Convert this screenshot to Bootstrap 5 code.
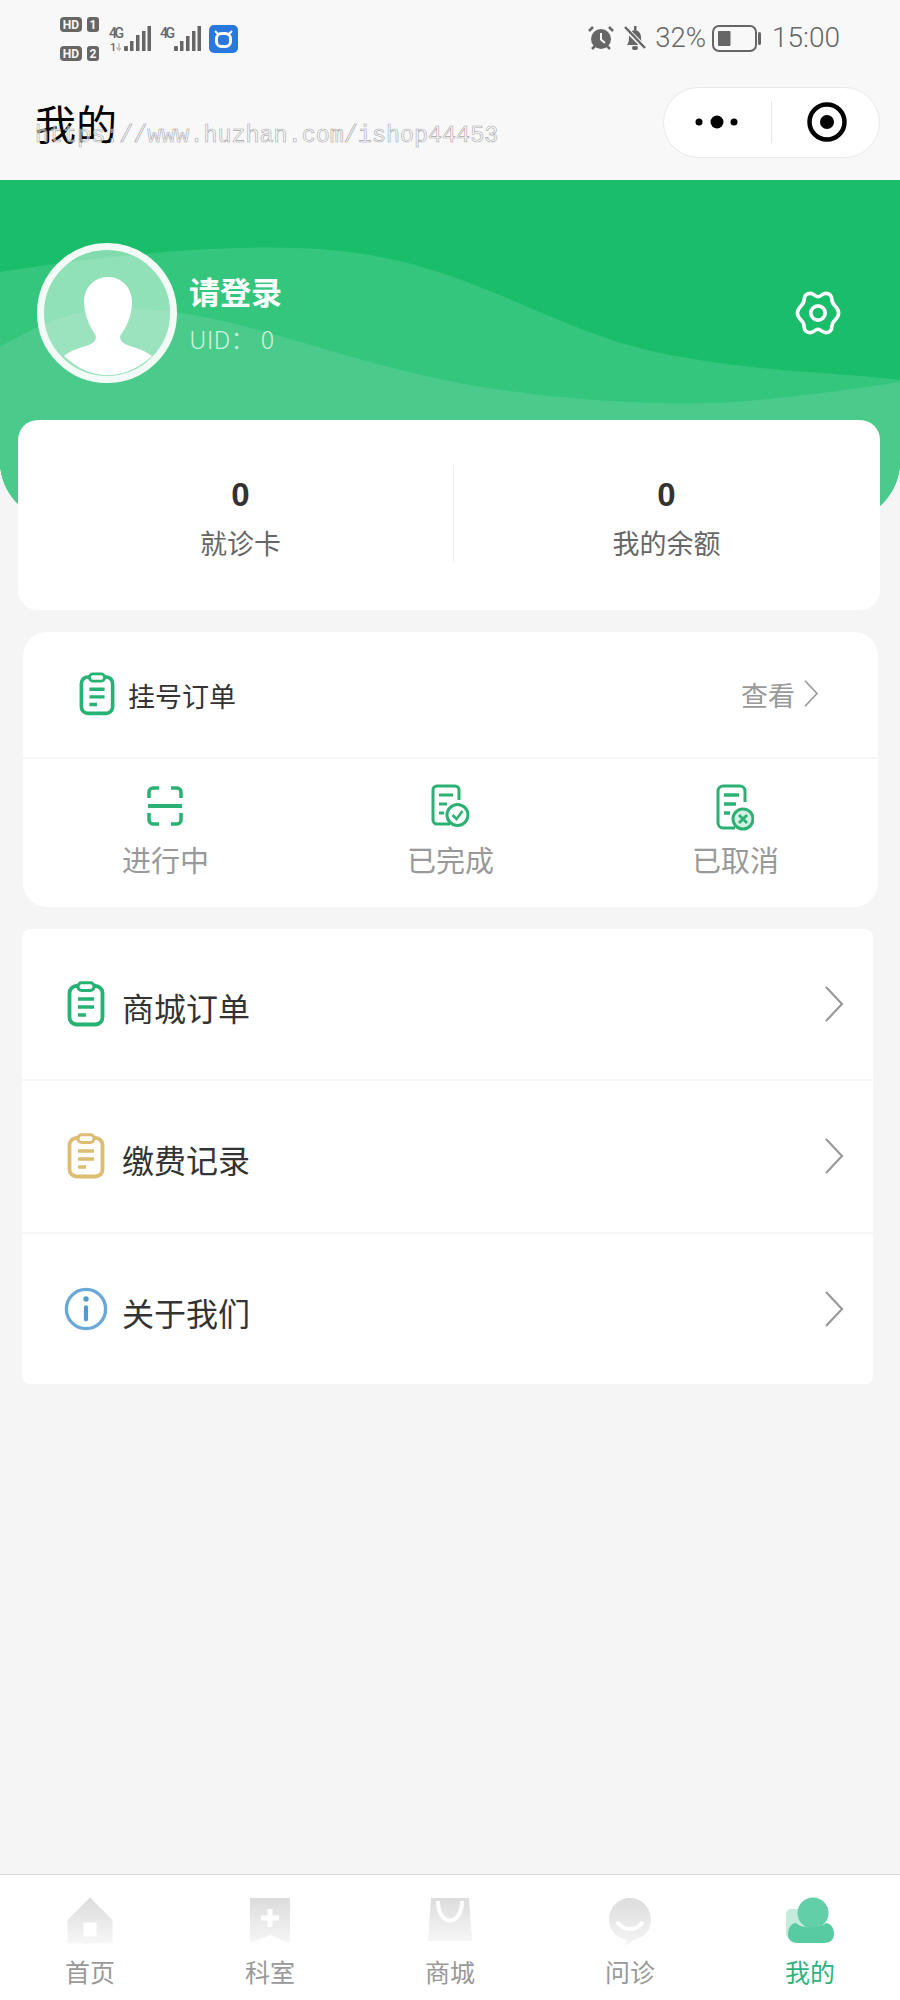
<!DOCTYPE html>
<html lang="zh-CN">
<head>
<meta charset="utf-8">
<title>我的</title>
<link href="https://cdn.jsdelivr.net/npm/bootstrap@5.3.0/dist/css/bootstrap.min.css" rel="stylesheet">
<style>
body{width:900px;min-height:2000px;margin:0;background:#f5f5f5;font-family:"Noto Sans CJK SC","Noto Sans",sans-serif;color:#333;overflow-x:hidden}
.shell{min-height:2000px}
.chrome{height:180px;background:#f8f8f9}
.statusline{height:70px;color:#666}
.statusline svg{display:block}
.status-right{padding:24px 60px 0 0;font-family:Roboto,sans-serif;font-weight:300;line-height:1;color:#666}
.pct{font-size:27.5px;margin:0 6px 0 7px}
.clock{font-size:28px;margin-left:10px}
.titlerow{height:110px;padding:0 20px 0 35px}
.title-text{font-size:41px;color:#000;line-height:1;margin-top:-6px}
.capsule{width:217px;height:71px;background:#fff;border:1px solid #e9e9e9;border-radius:36px;margin-top:-6px}
.watermark{position:absolute;left:35px;top:122px;font-family:"Liberation Mono",monospace;font-size:23.4px;line-height:1.2;color:rgba(255,255,255,.55);-webkit-text-stroke:.6px #a8a8a8;white-space:nowrap}
.hero{height:341px;background:#1abe6a;border-radius:0 0 60px 60px;overflow:hidden;padding:63px 59px 0 37px}
.wave{position:absolute;left:0;top:0}
.hero-row{position:relative}
.avatar-ring{width:140px;height:140px;border:7px solid #f2fbf6;background:rgba(255,255,255,.45);overflow:hidden;flex:none}
.avatar-ring svg{display:block}
.who{margin-left:12px}
.who-name{font-size:31px;font-weight:700;color:#fff;line-height:1;margin-bottom:20px}
.who-uid{font-size:25px;color:#cdf2de;line-height:1;font-weight:300}
.stats{margin:-101px 20px 0 18px;height:190px;border-radius:20px}
.stat-a{width:435px;padding-left:10px}
.stat-b{width:427px;position:relative}
.stat-b::before{content:"";position:absolute;left:0;top:45px;height:97px;width:1px;background:#f0f0f0}
.stat-num{font-family:"Liberation Sans",sans-serif;font-weight:700;font-size:33px;line-height:1;color:#333;padding-top:58px}
.stat-label{font-size:27px;line-height:1;color:#666;margin-top:18px}
.order{margin:22px 22px 0 23px;height:275px;border-radius:24px}
.order-head{height:127px;padding:0 59px 2px 56px;border-bottom:2px solid #f5f5f5}
.order-head-title{font-size:27px;line-height:1;color:#333;margin-left:13px;margin-top:4px}
.order-more{font-size:27px;line-height:1;color:#999;margin-top:2px}
.order-col{width:33.33%}
.order-icon{height:52px}
.order-label{font-size:29px;line-height:1;color:#999;margin-top:9px}
.order-body{padding-top:25px}
.menu{margin:22px 27px 0 22px;height:455px;border-radius:8px}
.menu-row{flex:1;padding:0 29px 0 42px;border-bottom:2px solid #f5f5f5}
.menu-row:last-child{border-bottom:0}
.menu-ico{width:44px}
.menu-text{font-size:32px;line-height:1;color:#333;margin-left:14px;margin-top:6px}
.tabs{height:126px;background:#fff;border-top:1px solid #d9d9d9}
.tab-item{width:180px;padding-top:22px}
.tab-label{font-size:25px;line-height:1;color:#999;margin-top:14px}
.tab-on{color:#2fb27c}
.tab-pic{height:48px}
.tab-pic svg{display:block}
</style>
</head>
<body>
<svg width="0" height="0" class="position-absolute">
  <defs>
    <symbol id="clip" viewBox="0 0 38 46">
      <rect x="2.5" y="5" width="33" height="38.5" rx="7" fill="none" stroke="currentColor" stroke-width="3.8"/>
      <rect x="11" y="1.8" width="16" height="7.6" rx="3.6" fill="#fff" stroke="currentColor" stroke-width="3"/>
      <path d="M11 18h16M11 26h16M11 34h8" fill="none" stroke="currentColor" stroke-width="3.6"/>
    </symbol>
    <symbol id="chev" viewBox="0 0 20 36">
      <path d="M2 1l16 17L2 35" fill="none" stroke="currentColor" stroke-width="2.2"/>
    </symbol>
    <linearGradient id="fade" x1="0" y1="0" x2="0" y2="1">
      <stop offset="0" stop-color="#dcdcdc"/>
      <stop offset="1" stop-color="#f6f6f6"/>
    </linearGradient>
  </defs>
</svg>

<div class="shell d-flex flex-column position-relative">
  <div class="chrome">
    <div class="statusline d-flex justify-content-between">
      <svg width="260" height="70" viewBox="0 0 260 70">
        <g font-family="Roboto,sans-serif" font-weight="700" fill="#f8f8f9" text-anchor="middle">
          <rect x="60" y="17" width="22" height="15" rx="4" fill="#666"/><text x="71" y="29" font-size="12">HD</text>
          <rect x="87" y="17" width="12" height="15" rx="3" fill="#666"/><text x="93" y="29" font-size="12">1</text>
          <rect x="60" y="46" width="22" height="15" rx="4" fill="#666"/><text x="71" y="58" font-size="12">HD</text>
          <rect x="87" y="46" width="12" height="15" rx="3" fill="#666"/><text x="93" y="58" font-size="12">2</text>
        </g>
        <g font-family="Roboto,sans-serif" font-weight="500" fill="#666" font-size="14">
          <text x="109" y="38" textLength="15">4G</text>
          <text x="160" y="38" textLength="15">4G</text>
          <text x="110" y="51" font-size="11">1</text>
        </g>
        <path d="M119 43v7l-2.500-2.500M119 50l2-2" stroke="#bbb" stroke-width="1.500" fill="none"/>
        <g fill="#666">
          <rect x="124" y="46" width="4" height="5" rx="1"/><rect x="130" y="41" width="3.500" height="10"/><rect x="136" y="35" width="3.500" height="16"/><rect x="142" y="31" width="3.500" height="20"/><rect x="147.500" y="26" width="3.500" height="25"/>
          <rect x="174" y="46" width="4" height="5" rx="1"/><rect x="180" y="41" width="3.500" height="10"/><rect x="186" y="36" width="3.500" height="15"/><rect x="192" y="31" width="3.500" height="20"/><rect x="197.500" y="26" width="3.500" height="25"/>
        </g>
        <rect x="209" y="25" width="29" height="28" rx="5" fill="#2b78dd"/>
        <rect x="216.500" y="33.500" width="14" height="13" rx="5" fill="none" stroke="#fff" stroke-width="3"/>
        <path d="M215 31l3 3M232 31l-3 3" stroke="#fff" stroke-width="2"/>
      </svg>
      <div class="status-right d-flex align-items-center align-self-start">
        <svg width="26" height="26" viewBox="0 0 26 26">
          <circle cx="13" cy="14" r="10" fill="#666"/>
          <path d="M13 8v6.500l4 3.500" stroke="#f8f8f9" stroke-width="2" fill="none"/>
          <path d="M1 6l4-4M25 6l-4-4M4 24l3-3M22 24l-3-3" stroke="#666" stroke-width="2.500"/>
        </svg>
        <svg width="26" height="26" viewBox="0 0 26 26" class="ms-2">
          <path d="M5 20c1.500-2 2-4 2-8 0-4 3-7 6-7s6 3 6 7c0 4 1 6 2.500 8z" fill="#666"/>
          <rect x="10" y="21" width="6" height="4" rx="2" fill="#666"/>
          <rect x="12" y="1" width="2.500" height="4" fill="#666"/>
          <path d="M3 3l20 20" stroke="#f8f8f9" stroke-width="5"/>
          <path d="M3 2l20 21" stroke="#666" stroke-width="2.500"/>
        </svg>
        <span class="pct">32%</span>
        <svg width="50" height="27" viewBox="0 0 50 27">
          <rect x="1" y="1" width="43" height="25" rx="6" fill="none" stroke="#666" stroke-width="2"/>
          <rect x="6" y="6" width="12.500" height="15" rx="1" fill="#666"/>
          <rect x="46" y="7" width="3" height="13" rx="1.500" fill="#666"/>
        </svg>
        <span class="clock">15:00</span>
      </div>
    </div>
    <div class="titlerow d-flex justify-content-between align-items-center">
      <div class="title-text">我的</div>
      <div class="capsule d-flex align-items-center">
        <svg width="215" height="69" viewBox="0 0 215 69">
          <circle cx="35" cy="34" r="3.500" fill="#000"/><circle cx="53" cy="34" r="6.500" fill="#000"/><circle cx="70" cy="34" r="3.500" fill="#000"/>
          <path d="M107.500 13v42" stroke="#e6e6e6" stroke-width="1"/>
          <circle cx="163" cy="34" r="17.500" fill="none" stroke="#000" stroke-width="4.500"/><circle cx="163" cy="34" r="7" fill="#000"/>
        </svg>
      </div>
    </div>
  </div>

  <div class="watermark">https://www.huzhan.com/ishop44453</div>

  <div class="hero position-relative">
    <svg class="wave" width="900" height="341" viewBox="0 0 900 341">
      <path d="M0 92C90 78 230 60 340 71 470 84 550 150 660 173 760 193 840 192 900 200V341H0Z" fill="#35c67e"/>
      <path d="M0 167C30 150 70 126 130 128 240 132 330 180 470 205 570 222 680 228 760 220 820 214 860 208 900 202V341H0Z" fill="#4acb8b"/>
    </svg>
    <div class="hero-row d-flex align-items-center">
      <div class="avatar-ring rounded-circle">
        <svg width="126" height="126" viewBox="0 0 126 126">
          <path d="M64 27C50 27 40 38 40 52 40 66 47 78 52 86 52 92 48 94 42 96 32 99 26 101 20 106 35 120 50 125 63 125 80 125 95 118 108 106 100 100 92 98 86 96 80 94 76 92 76 86 82 78 88 66 88 52 88 38 78 27 64 27Z" fill="#fff"/>
        </svg>
      </div>
      <div class="who flex-grow-1">
        <div class="who-name">请登录</div>
        <div class="who-uid">UID： 0</div>
      </div>
      <svg width="46" height="46" viewBox="0 0 48 48">
        <path d="M24 7C27 7 28.500 3.500 32 3.500 36 3.500 38.500 6 38.500 10 38.500 13 40 15 42 17 44.500 19.500 45.500 21.500 45.500 24 45.500 26.500 44.500 28.500 42 31 40 33 38.500 35 38.500 38 38.500 42 36 44.500 32 44.500 28.500 44.500 27 41 24 41 21 41 19.500 44.500 16 44.500 12 44.500 9.500 42 9.500 38 9.500 35 8 33 6 31 3.500 28.500 2.500 26.500 2.500 24 2.500 21.500 3.500 19.500 6 17 8 15 9.500 13 9.500 10 9.500 6 12 3.500 16 3.500 19.500 3.500 21 7 24 7Z" fill="none" stroke="#fff" stroke-width="3.800"/>
        <circle cx="24" cy="24" r="7.500" fill="none" stroke="#fff" stroke-width="3.800"/>
      </svg>
    </div>
  </div>

  <div class="card border-0 stats position-relative">
    <div class="d-flex">
      <div class="stat-a text-center">
        <div class="stat-num">0</div>
        <div class="stat-label">就诊卡</div>
      </div>
      <div class="stat-b text-center">
        <div class="stat-num">0</div>
        <div class="stat-label">我的余额</div>
      </div>
    </div>
  </div>

  <div class="card border-0 order">
    <div class="order-head d-flex align-items-center justify-content-between">
      <div class="d-flex align-items-center">
        <svg width="36" height="44" style="color:#26b273"><use href="#clip"/></svg>
        <span class="order-head-title">挂号订单</span>
      </div>
      <div class="d-flex align-items-center gap-2">
        <span class="order-more">查看</span>
        <svg width="16" height="27" style="color:#999"><use href="#chev"/></svg>
      </div>
    </div>
    <div class="order-body d-flex text-center">
      <div class="order-col">
        <div class="order-icon d-flex justify-content-center">
          <svg width="38" height="44" viewBox="0 0 38 44" fill="none" stroke="#2bb173" stroke-width="3.500">
            <path d="M13 4H7a4 4 0 0 0-4 4v6M25 4h6a4 4 0 0 1 4 4v6M3 29v7a4 4 0 0 0 4 4h6M35 29v7a4 4 0 0 1-4 4h-6"/>
            <path d="M2 22h34" stroke-width="4"/>
          </svg>
        </div>
        <div class="order-label">进行中</div>
      </div>
      <div class="order-col">
        <div class="order-icon d-flex justify-content-center">
          <svg width="38" height="46" viewBox="0 0 38 46" fill="none" stroke="#2bb173" stroke-width="3">
            <path d="M19 40H6a4 4 0 0 1-4-4V6a4 4 0 0 1 4-4h18a4 4 0 0 1 4 4v10"/>
            <path d="M8 11h14M8 20h8M8 29h5"/>
            <circle cx="26.500" cy="31" r="10.500" fill="#fff"/>
            <path d="M21.500 31l4 4 6-8" stroke-width="2.500"/>
          </svg>
        </div>
        <div class="order-label">已完成</div>
      </div>
      <div class="order-col">
        <div class="order-icon d-flex justify-content-center">
          <svg width="38" height="49" viewBox="0 0 38 49" class="doc-x" fill="none" stroke="#2bb173" stroke-width="3">
            <path d="M19 44H7a5 5 0 0 1-5-5V7a5 5 0 0 1 5-5h17a5 5 0 0 1 5 5v11"/>
            <path d="M8 11h15M8 20h12M8 29h6" stroke-width="3.400"/>
            <circle cx="27" cy="35" r="10" fill="#d4f0e2"/>
            <path d="M23 31l8 8M31 31l-8 8" stroke-width="2.800"/>
          </svg>
        </div>
        <div class="order-label">已取消</div>
      </div>
    </div>
  </div>

  <div class="card border-0 menu d-flex flex-column">
    <div class="menu-row d-flex align-items-center">
      <div class="menu-ico d-flex justify-content-center"><svg width="38" height="46" style="color:#26b273"><use href="#clip"/></svg></div>
      <span class="menu-text flex-grow-1">商城订单</span>
      <svg width="20" height="36" style="color:#999"><use href="#chev"/></svg>
    </div>
    <div class="menu-row d-flex align-items-center">
      <div class="menu-ico d-flex justify-content-center"><svg width="38" height="46" style="color:#dcbd72"><use href="#clip"/></svg></div>
      <span class="menu-text flex-grow-1">缴费记录</span>
      <svg width="20" height="36" style="color:#999"><use href="#chev"/></svg>
    </div>
    <div class="menu-row d-flex align-items-center">
      <div class="menu-ico d-flex justify-content-center">
        <svg width="46" height="46" viewBox="0 0 46 46">
          <circle cx="23" cy="23" r="20.500" fill="none" stroke="#69a9d8" stroke-width="3.500"/>
          <circle cx="23" cy="12.500" r="2.800" fill="#4f9ad6"/>
          <rect x="20.800" y="19" width="4.400" height="17" rx="2.200" fill="#4f9ad6"/>
        </svg>
      </div>
      <span class="menu-text flex-grow-1">关于我们</span>
      <svg width="20" height="36" style="color:#999"><use href="#chev"/></svg>
    </div>
  </div>

  <div class="flex-grow-1"></div>

  <nav class="tabs d-flex text-center">
    <div class="tab-item">
      <div class="tab-pic d-flex justify-content-center">
        <svg width="46" height="48" viewBox="0 0 46 48"><path fill-rule="evenodd" d="M23 1L45 23V46H1V23ZM16 25V40H30V25Z" fill="url(#fade)" stroke="url(#fade)" stroke-linejoin="round"/></svg>
      </div>
      <div class="tab-label">首页</div>
    </div>
    <div class="tab-item">
      <div class="tab-pic d-flex justify-content-center">
        <svg width="42" height="48" viewBox="0 0 42 48"><path fill-rule="evenodd" d="M1 1H41V46L21 38 1 46ZM18.500 12V18.500H12V23.500H18.500V30H23.500V23.500H30V18.500H23.500V12Z" fill="url(#fade)"/></svg>
      </div>
      <div class="tab-label">科室</div>
    </div>
    <div class="tab-item">
      <div class="tab-pic d-flex justify-content-center">
        <svg width="46" height="48" viewBox="0 0 46 48"><path d="M4 1H42L45 44H1Z" fill="url(#fade)"/><path d="M11 4C11 30 35 30 35 4" fill="none" stroke="#fff" stroke-width="4"/></svg>
      </div>
      <div class="tab-label">商城</div>
    </div>
    <div class="tab-item">
      <div class="tab-pic d-flex justify-content-center">
        <svg width="44" height="50" viewBox="0 0 44 50"><path d="M22 1C34 1 43 11 43 23 43 35 34 41 26 43L17 49 19 43C9 41 1 34 1 23 1 11 10 1 22 1Z" fill="url(#fade)"/><path d="M10 26C16 34 28 34 34 26" fill="none" stroke="#fff" stroke-width="4" stroke-linecap="round"/></svg>
      </div>
      <div class="tab-label">问诊</div>
    </div>
    <div class="tab-item">
      <div class="tab-pic d-flex justify-content-center">
        <svg width="48" height="48" viewBox="0 0 48 48">
          <rect x="0" y="12" width="30" height="30" rx="5" fill="#c5ebdc"/>
          <circle cx="27" cy="16" r="15.500" fill="#63cfa8"/>
          <path d="M2 38C2 30 6 26 10 26 16 32 34 32 40 26 44 26 48 30 48 37 48 43 44 46 38 46H12C6 46 2 43 2 38Z" fill="#59cba2"/>
        </svg>
      </div>
      <div class="tab-label tab-on">我的</div>
    </div>
  </nav>
</div>
</body>
</html>
